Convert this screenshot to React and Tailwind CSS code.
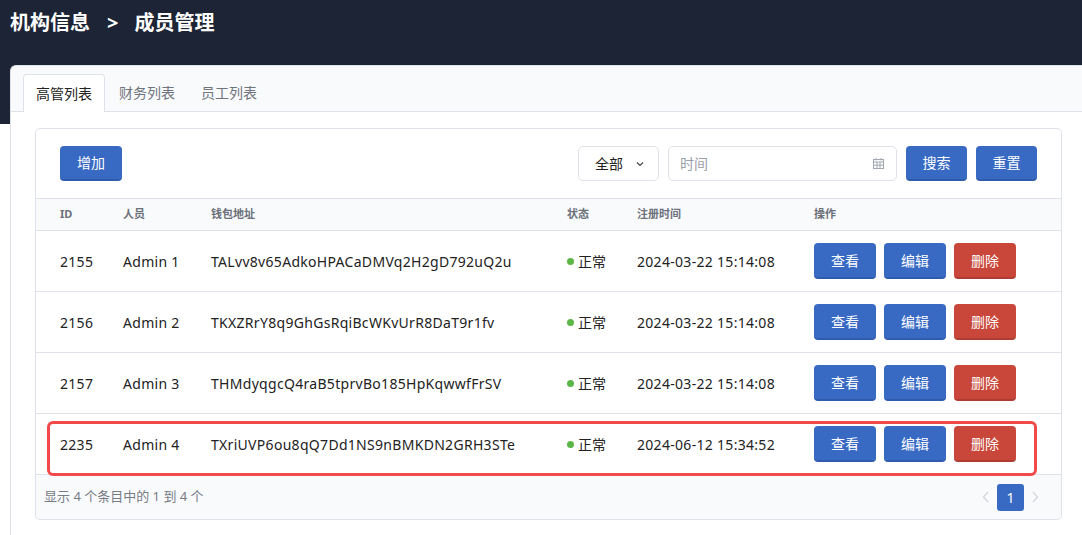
import React from 'react';

const rows = [
  { id: 2155, name: 'Admin 1', wallet: 'TALvv8v65AdkoHPACaDMVq2H2gD792uQ2u', time: '2024-03-22 15:14:08' },
  { id: 2156, name: 'Admin 2', wallet: 'TKXZRrY8q9GhGsRqiBcWKvUrR8DaT9r1fv', time: '2024-03-22 15:14:08' },
  { id: 2157, name: 'Admin 3', wallet: 'THMdyqgcQ4raB5tprvBo185HpKqwwfFrSV', time: '2024-03-22 15:14:08' },
  { id: 2235, name: 'Admin 4', wallet: 'TXriUVP6ou8qQ7Dd1NS9nBMKDN2GRH3STe', time: '2024-06-12 15:34:52', marked: true },
];

const cols = 'grid grid-cols-[63px_88px_356px_70px_177px_1fr] items-center pl-[24px]';

const Btn = ({ children, red, className = 'h-[36px] w-[62px]' }) => (
  <button
    className={`rounded-[4px] text-[14px] text-white border-b-2 ${
      red ? 'bg-[#c8473a] border-[#b03d32]' : 'bg-[#386ac4] border-[#2f5cad]'
    } ${className}`}
  >
    {children}
  </button>
);

const CalendarIcon = () => (
  <svg width="13" height="13" viewBox="0 0 13 13" fill="none" stroke="#a3a8b0" strokeWidth="1">
    <rect x="1.5" y="2.5" width="10" height="9" />
    <line x1="1.5" y1="5" x2="11.5" y2="5" />
    <line x1="4" y1="1" x2="4" y2="3.5" />
    <line x1="9" y1="1" x2="9" y2="3.5" />
    <line x1="5" y1="5" x2="5" y2="11.5" />
    <line x1="8" y1="5" x2="8" y2="11.5" />
    <line x1="1.5" y1="8.2" x2="11.5" y2="8.2" />
  </svg>
);

export default function App() {
  return (
    <div className="h-[535px] overflow-hidden bg-white font-['Noto_Sans','Noto_Sans_CJK_SC',sans-serif] text-[#222]">
      <div className="h-[124px] bg-[#1c2435] pl-[10px] pt-[9px]">
        <h1 className="flex items-center text-[20px] font-bold leading-[28px] text-white">
          <span>机构信息</span>
          <span className="ml-[17px] mr-[16px]">&gt;</span>
          <span>成员管理</span>
        </h1>
      </div>

      <div className="-mt-[59px] ml-[10px] h-[470px] rounded-tl-[6px] border-l border-t border-[#dfe2e8] bg-white">
        <div className="flex h-[46px] items-end gap-[1px] rounded-tl-[6px] border-b border-[#dfe2e8] bg-[#f9fafc] pl-[12px]">
          <div className="-mb-px flex h-[38px] w-[82px] items-center justify-center rounded-t-[4px] border border-b-0 border-[#dfe2e8] bg-white text-[14px] text-[#222]">
            高管列表
          </div>
          <div className="flex h-[37px] w-[82px] items-center justify-center text-[14px] text-[#70757d]">财务列表</div>
          <div className="-ml-[1px] flex h-[37px] w-[82px] items-center justify-center text-[14px] text-[#70757d]">员工列表</div>
        </div>

        <div className="pl-[24px] pr-[20px] pt-[16px]">
          <div className="overflow-visible rounded-[5px] border border-[#dfe2e8]">
            <div className="flex h-[69px] items-center justify-between px-[24px]">
              <Btn className="h-[35px] w-[62px]">增加</Btn>
              <div className="flex items-center gap-[9px]">
                <div className="flex h-[35px] w-[81px] items-center rounded-[5px] border border-[#dfe2e8] bg-white pl-[16px] text-[14px] text-[#222]">
                  全部
                  <svg className="ml-[12px]" width="10" height="10" viewBox="0 0 10 10" fill="none" stroke="#444" strokeWidth="1.2">
                    <path d="M2 3.5 L5 6.5 L8 3.5" />
                  </svg>
                </div>
                <div className="flex h-[35px] w-[229px] items-center justify-between rounded-[5px] border border-[#dfe2e8] bg-white pl-[11px] pr-[11px] text-[14px] text-[#9aa0a8]">
                  时间
                  <CalendarIcon />
                </div>
                <Btn className="h-[35px] w-[61px]">搜索</Btn>
                <Btn className="h-[35px] w-[61px]">重置</Btn>
              </div>
            </div>

            <div className={`${cols} h-[33px] border-y border-[#dfe2e8] bg-[#f9fafc] text-[11px] font-bold text-[#6b7079]`}>
              <span>ID</span>
              <span>人员</span>
              <span>钱包地址</span>
              <span>状态</span>
              <span>注册时间</span>
              <span>操作</span>
            </div>

            {rows.map((r) => (
              <div key={r.id} className={`${cols} relative h-[61px] border-b border-[#dfe2e8] text-[14px] tracking-[0.3px] text-[#222]`}>
                {r.marked && (
                  <div className="pointer-events-none absolute left-[11px] top-[7px] h-[55px] w-[990px] rounded-[6px] border-[3px] border-[#f24a4a]" />
                )}
                <span>{r.id}</span>
                <span>{r.name}</span>
                <span>{r.wallet}</span>
                <span className="flex items-center gap-[4px] tracking-normal">
                  <span className="h-[7px] w-[7px] rounded-full bg-[#5cb646]" />
                  正常
                </span>
                <span>{r.time}</span>
                <span className="flex gap-[8px] tracking-normal">
                  <Btn>查看</Btn>
                  <Btn>编辑</Btn>
                  <Btn red>删除</Btn>
                </span>
              </div>
            ))}

            <div className="flex h-[44px] items-center justify-between rounded-b-[5px] bg-[#f9fafc] pl-[8px] pr-[21px] text-[13px] text-[#777c84]">
              <span>显示 4 个条目中的 1 到 4 个</span>
              <div className="flex items-center gap-[6px]">
                <svg width="10" height="14" viewBox="0 0 10 14" fill="none" stroke="#d3d6db" strokeWidth="1.3">
                  <path d="M7 2 L2.5 7 L7 12" />
                </svg>
                <span className="flex h-[27px] w-[27px] items-center justify-center rounded-[3px] bg-[#386ac4] text-[14px] text-white">1</span>
                <svg width="10" height="14" viewBox="0 0 10 14" fill="none" stroke="#d3d6db" strokeWidth="1.3">
                  <path d="M3 2 L7.5 7 L3 12" />
                </svg>
              </div>
            </div>
          </div>
        </div>
      </div>
    </div>
  );
}
